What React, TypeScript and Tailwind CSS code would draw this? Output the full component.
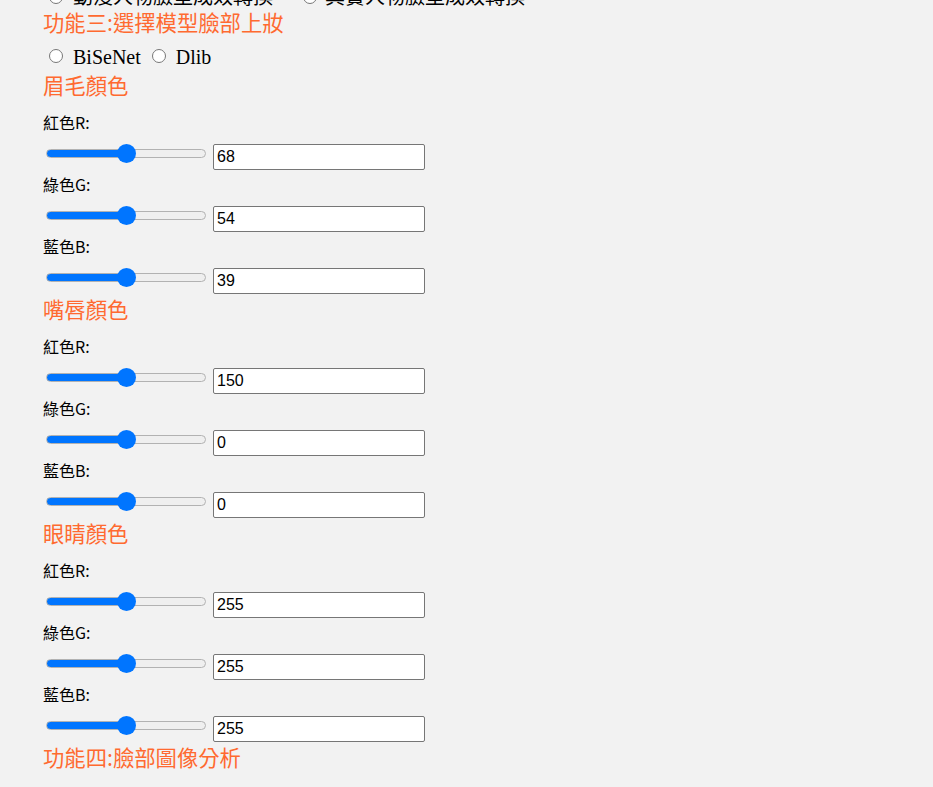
import React from 'react';

type Channel = { label: string; value: number };

const sections: { title: string; channels: Channel[] }[] = [
  {
    title: '眉毛顏色',
    channels: [
      { label: '紅色R:', value: 68 },
      { label: '綠色G:', value: 54 },
      { label: '藍色B:', value: 39 },
    ],
  },
  {
    title: '嘴唇顏色',
    channels: [
      { label: '紅色R:', value: 150 },
      { label: '綠色G:', value: 0 },
      { label: '藍色B:', value: 0 },
    ],
  },
  {
    title: '眼睛顏色',
    channels: [
      { label: '紅色R:', value: 255 },
      { label: '綠色G:', value: 255 },
      { label: '藍色B:', value: 255 },
    ],
  },
];

const cjk = "font-['Noto_Sans_CJK_TC','Liberation_Sans',sans-serif]";

function Slider({ value }: { value: number }) {
  const [v, setV] = React.useState(value);
  // thumb is 18px on a 160px track
  const pos = (v / 255) * 142;
  return (
    <div className="relative ml-[3px] h-[20px] w-[160px]">
      <div
        className="mt-[5px] h-[9px] w-full rounded-full border border-[#b2b2b2]"
        style={{ background: `linear-gradient(to right, #0075ff ${pos + 9}px, #efefef ${pos + 9}px)` }}
      />
      <div className="absolute top-0 h-[19px] w-[19px] rounded-full bg-[#0075ff]" style={{ left: pos }} />
      <input
        type="range"
        min={0}
        max={255}
        value={v}
        onChange={(e) => setV(Number(e.target.value))}
        className="absolute inset-0 h-full w-full cursor-pointer opacity-0"
      />
    </div>
  );
}

function ColorRow({ label, value }: Channel) {
  return (
    <div>
      <div className={`h-[36px] pt-[2px] text-[16px] leading-[24px] text-black ${cjk}`}>{label}</div>
      <div className="flex h-[26px] items-start">
        <Slider value={128} />
        <input
          type="text"
          defaultValue={value}
          className="ml-[7px] h-[26px] w-[212px] rounded-[2px] border border-[#767676] bg-white px-[3px] font-['Liberation_Sans',sans-serif] text-[16px] text-black outline-none"
        />
      </div>
    </div>
  );
}

function Heading({ children }: { children: React.ReactNode }) {
  return (
    <div className={`h-[38px] text-[21.33px] leading-[30px] text-[#ff6a30] ${cjk}`}>{children}</div>
  );
}

export default function App() {
  return (
    <div className="min-h-[787px] w-full overflow-hidden bg-[#f2f2f2] pl-[43px]">
      {/* previous feature's options, mostly scrolled out of view */}
      <div className="-mt-[13px] flex h-[20px] items-center font-['Liberation_Serif','Noto_Sans_CJK_TC',serif] text-[20px] leading-[20px] text-black">
        <input type="radio" name="style" className="ml-[6px] mr-[10px] h-[14px] w-[14px]" />
        <span>動漫人物臉型成效轉換</span>
        <input type="radio" name="style" className="ml-[30px] mr-[8px] h-[14px] w-[14px]" />
        <span>真實人物臉型成效轉換</span>
      </div>

      <div className={`text-[21.33px] leading-[30px] text-[#ff6a30] ${cjk}`}>功能三:選擇模型臉部上妝</div>

      <div className="mt-[8px] flex h-[24px] items-center font-['Liberation_Serif',serif] text-[20px] text-black">
        <input type="radio" name="model" className="-mt-[3px] ml-[6px] mr-[10px] h-[14px] w-[14px]" />
        <label>BiSeNet</label>
        <input type="radio" name="model" className="-mt-[3px] ml-[11px] mr-[10px] h-[14px] w-[14px]" />
        <label>Dlib</label>
      </div>

      <div className="mt-[1px]">
        {sections.map((s) => (
          <div key={s.title}>
            <Heading>{s.title}</Heading>
            {s.channels.map((c) => (
              <ColorRow key={c.label} {...c} />
            ))}
          </div>
        ))}
        <Heading>功能四:臉部圖像分析</Heading>
      </div>
    </div>
  );
}
